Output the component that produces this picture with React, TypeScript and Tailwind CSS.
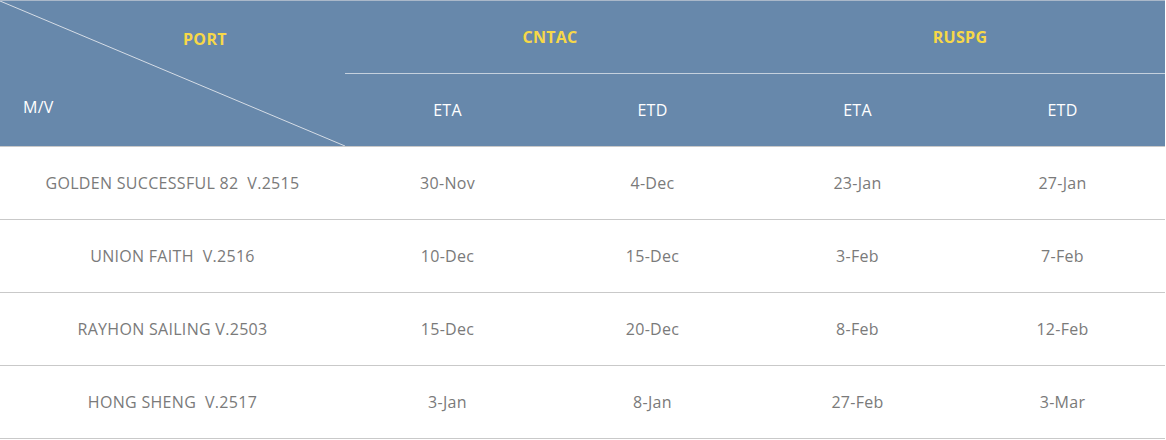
const rows = [
  { name: "GOLDEN SUCCESSFUL 82\u00a0\u00a0V.2515", a: "30-Nov", b: "4-Dec", c: "23-Jan", d: "27-Jan" },
  { name: "UNION FAITH\u00a0\u00a0V.2516", a: "10-Dec", b: "15-Dec", c: "3-Feb", d: "7-Feb" },
  { name: "RAYHON SAILING V.2503", a: "15-Dec", b: "20-Dec", c: "8-Feb", d: "12-Feb" },
  { name: "HONG SHENG\u00a0\u00a0V.2517", a: "3-Jan", b: "8-Jan", c: "27-Feb", d: "3-Mar" },
]

export default function App() {
  return (
    <div className="w-[1166px] h-[440px] bg-white font-['Open_Sans','Noto_Sans',sans-serif]">
      <table className="w-[1165px] border-collapse table-fixed text-[16px] tracking-[0.3px]">
        <colgroup>
          <col className="w-[345px]" />
          <col className="w-[205px]" />
          <col className="w-[205px]" />
          <col className="w-[205px]" />
          <col className="w-[205px]" />
        </colgroup>
        <thead className="bg-[#6788ab]">
          <tr className="h-[73px] border-t border-[#aab8c9]">
            <th rowSpan={2} className="relative p-0 border-b border-[#c9c9c9] align-top">
              <svg className="absolute inset-0 w-full h-full" viewBox="0 0 345 146" preserveAspectRatio="none">
                <line x1="0" y1="0" x2="345" y2="146" stroke="#d6dde6" strokeWidth="1" />
              </svg>
              <div className="relative h-[145px] flex flex-col justify-between pt-[26px] pb-[27px]">
                <span className="pl-[183px] text-left text-[#f7d848] font-bold">PORT</span>
                <span className="pl-[23px] text-left text-white font-normal">M/V</span>
              </div>
            </th>
            <th colSpan={2} className="pb-[1px] border-b border-[#c5d1de] text-[#f7d848] font-bold">CNTAC</th>
            <th colSpan={2} className="pb-[1px] border-b border-[#c5d1de] text-[#f7d848] font-bold">RUSPG</th>
          </tr>
          <tr className="h-[73px] text-white">
            <th className="font-normal border-b border-[#c9c9c9]">ETA</th>
            <th className="font-normal border-b border-[#c9c9c9]">ETD</th>
            <th className="font-normal border-b border-[#c9c9c9]">ETA</th>
            <th className="font-normal border-b border-[#c9c9c9]">ETD</th>
          </tr>
        </thead>
        <tbody className="text-[#7a7a7a]">
          {rows.map((r) => (
            <tr key={r.name} className="h-[73px] border-b border-[#c9c9c9] text-center">
              <td>{r.name}</td>
              <td>{r.a}</td>
              <td>{r.b}</td>
              <td>{r.c}</td>
              <td>{r.d}</td>
            </tr>
          ))}
        </tbody>
      </table>
    </div>
  )
}
